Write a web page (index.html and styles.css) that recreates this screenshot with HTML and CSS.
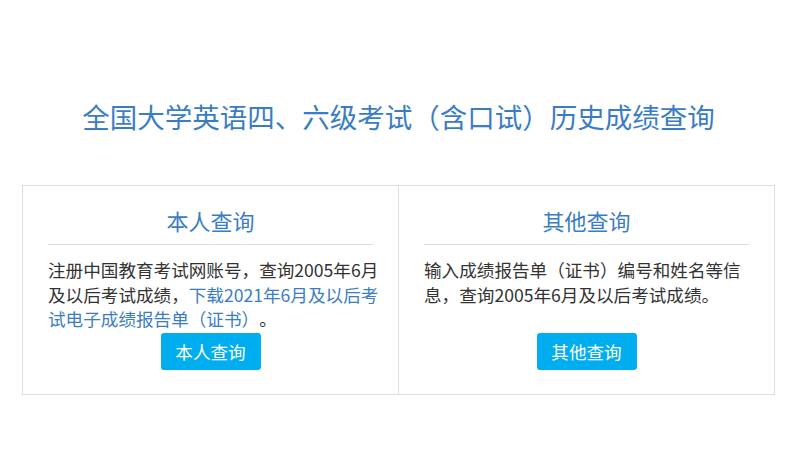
FILE: index.html
```html
<!DOCTYPE html>
<html lang="zh-CN">
<head>
  <meta charset="UTF-8">
  <meta name="viewport" content="width=device-width, initial-scale=1.0">
  <title>全国大学英语四、六级考试（含口试）历史成绩查询</title>
  <link rel="stylesheet" href="styles.css">
</head>
<body>
  <div class="container">
    <h1 class="page-title">全国大学英语四、六级考试（含口试）历史成绩查询</h1>
    <div class="query-box">
      <div class="query-col">
        <h2>本人查询</h2>
        <p class="desc">注册中国教育考试网账号，查询2005年6月及以后考试成绩，<a href="#">下载2021年6月及以后考试电子成绩报告单（证书）</a>。</p>
        <div class="btn-row">
          <a class="btn" href="#">本人查询</a>
        </div>
      </div>
      <div class="query-col">
        <h2>其他查询</h2>
        <p class="desc">输入成绩报告单（证书）编号和姓名等信息，查询2005年6月及以后考试成绩。</p>
        <div class="btn-row">
          <a class="btn" href="#">其他查询</a>
        </div>
      </div>
    </div>
  </div>
</body>
</html>
```

FILE: styles.css
```css
body {
  font-family: "Noto Sans CJK SC", "Noto Sans", sans-serif;
  background-color: #fff;
  color: #333;
  margin: 0;
  padding: 0;
  text-spacing-trim: space-all;
}
.container {
  width: 753px;
  margin: 0 0 0 22px;
}
.page-title {
  margin: 0;
  padding-top: 96px;
  font-size: 27.5px;
  font-weight: normal;
  line-height: 40px;
  text-align: center;
  color: #3a7dc4;
}
.query-box {
  margin-top: 49px;
  border: 1px solid #ddd;
  display: grid;
  grid-template-columns: 375px 1fr;
}
.query-col {
  padding: 18px 0 24px 25px;
}
.query-col + .query-col {
  border-left: 1px solid #ddd;
}
.query-col h2 {
  width: 325px;
  margin: 0;
  padding-bottom: 8px;
  border-bottom: 1px solid #ddd;
  font-size: 22px;
  font-weight: normal;
  line-height: 32px;
  text-align: center;
  color: #3a7dc4;
}
.desc {
  width: 334px;
  min-height: 74px;
  margin: 13px 0 1px;
  font-size: 17.6px;
  line-height: 24.6px;
}
.desc a {
  color: #3a7dc4;
  text-decoration: none;
}
.btn-row {
  width: 325px;
  display: flex;
  justify-content: center;
}
.btn {
  width: 100px;
  height: 37px;
  line-height: 37px;
  text-align: center;
  font-size: 17.6px;
  color: #fff;
  background-color: #00aeef;
  border-radius: 3px;
  text-decoration: none;
}
```
